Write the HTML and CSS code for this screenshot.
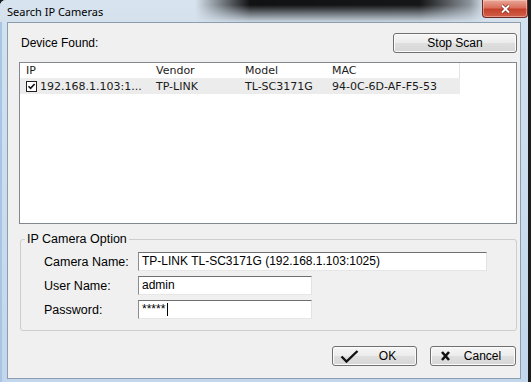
FILE: index.html
```html
<!DOCTYPE html>
<html lang="en">
<head>
    <meta charset="UTF-8">
    <meta name="viewport" content="width=device-width, initial-scale=1.0">
    <title>Search IP Cameras</title>
    <link rel="stylesheet" href="styles.css">
</head>
<body>
    <div class="window">
        <!-- Titelleiste -->
        <div class="titlebar">
            <span class="title">Search IP Cameras</span>
            <span class="close-btn">
                <svg width="11" height="10" viewBox="0 0 11 10">
                    <path d="M2 1.5 L9 8.5 M9 1.5 L2 8.5" stroke="#7a2015" stroke-width="3.2" fill="none"/>
                    <path d="M2 1.5 L9 8.5 M9 1.5 L2 8.5" stroke="#ffffff" stroke-width="2" fill="none"/>
                </svg>
            </span>
        </div>

        <div class="client">
            <div class="top-row">
                <span class="text">Device Found:</span>
                <button class="btn btn-scan">Stop Scan</button>
            </div>

            <!-- Geräteliste -->
            <div class="listview">
                <div class="list-head">
                    <div class="col col-ip">IP</div>
                    <div class="col col-vendor">Vendor</div>
                    <div class="col col-model">Model</div>
                    <div class="col col-mac">MAC</div>
                </div>
                <div class="list-row">
                    <div class="col col-ip">
                        <svg class="checkbox" width="11" height="11" viewBox="0 0 11 11">
                            <rect x="0.5" y="0.5" width="10" height="10" fill="#fff" stroke="#1f1f1f"/>
                            <path d="M2.5 5.2 L4.6 7.4 L8.6 3" stroke="#111" stroke-width="1.6" fill="none"/>
                        </svg>
                        192.168.1.103:1...
                    </div>
                    <div class="col col-vendor">TP-LINK</div>
                    <div class="col col-model">TL-SC3171G</div>
                    <div class="col col-mac">94-0C-6D-AF-F5-53</div>
                </div>
            </div>

            <!-- Kamera-Optionen -->
            <fieldset class="group">
                <legend>IP Camera Option</legend>
                <div class="form">
                    <span class="form-label">Camera Name:</span>
                    <div class="field field-wide">TP-LINK TL-SC3171G (192.168.1.103:1025)</div>
                    <span class="form-label">User Name:</span>
                    <div class="field">admin</div>
                    <span class="form-label">Password:</span>
                    <div class="field">*****<span class="caret"></span></div>
                </div>
            </fieldset>

            <div class="actions">
                <button class="btn btn-icon">
                    <svg class="icon-ok" width="19" height="13" viewBox="0 0 19 13">
                        <path d="M1.5 6.5 L6.5 11.5 L17.5 1" stroke="#111" stroke-width="2.4" fill="none"/>
                    </svg>
                    <span class="btn-text">OK</span>
                </button>
                <button class="btn btn-icon">
                    <svg class="icon-cancel" width="9" height="10" viewBox="0 0 9 10">
                        <path d="M1 1 L8 9 M8 1 L1 9" stroke="#111" stroke-width="2.6" fill="none"/>
                    </svg>
                    <span class="btn-text">Cancel</span>
                </button>
            </div>
        </div>
    </div>
</body>
</html>
```

FILE: styles.css
```css
body {
    margin: 0;
    padding: 0;
    background-color: #1c1c1c;
    font-family: 'Liberation Sans', Arial, sans-serif;
    font-size: 12px;
    color: #000000;
}

/* Fensterrahmen */
.window {
    box-sizing: border-box;
    width: 528px;
    height: 382px;
    padding: 0 7px 3px;
    display: flex;
    flex-direction: column;
    background: linear-gradient(180deg, #d4e2f0 0%, #c2d7ec 100%);
    border-radius: 6px 6px 0 0;
    box-shadow: inset 2px 0 0 #a8c5e3, inset 0 1px 0 #8a98a8;
}

.titlebar {
    height: 22px;
    margin: 0 -7px;
    display: flex;
    align-items: flex-start;
    border-radius: 6px 6px 0 0;
    background:
        linear-gradient(180deg, rgba(212, 224, 236, 0) 0, rgba(212, 224, 236, 0) 5px, rgba(212, 224, 236, 0.95) 22px),
        linear-gradient(90deg, rgba(0, 0, 0, 0) 195px, rgba(0, 0, 0, 0.92) 250px, rgba(0, 0, 0, 0.9) 420px, rgba(0, 0, 0, 0.35) 470px, rgba(0, 0, 0, 0) 485px),
        #d7e3ee;
}

.title {
    font-family: 'Noto Sans', sans-serif;
    font-size: 11px;
    line-height: 22px;
    padding: 1px 0 0 7px;
}

.close-btn {
    margin-left: auto;
    width: 46px;
    height: 18px;
    box-sizing: border-box;
    display: flex;
    align-items: center;
    justify-content: center;
    border: 1px solid #6e2a22;
    border-top: none;
    border-radius: 0 0 4px 4px;
    background: linear-gradient(180deg, #e9a89a 0%, #d9705d 45%, #c5422c 55%, #d0604a 100%);
    box-shadow: inset 0 0 0 1px rgba(255, 220, 210, 0.45);
}

/* Client-Bereich */
.client {
    flex: 1;
    box-sizing: border-box;
    display: flex;
    flex-direction: column;
    padding: 10px 3px 0 11px;
    background-color: #f0f0f0;
    border: 1px solid #8d9db0;
}

.top-row {
    height: 20px;
    display: flex;
    align-items: center;
    justify-content: space-between;
}

.top-row .text {
    margin-left: 2px;
}

.btn {
    box-sizing: border-box;
    height: 20px;
    padding: 0;
    margin: 0;
    font-family: 'Liberation Sans', Arial, sans-serif;
    font-size: 12px;
    color: #000;
    border: 1px solid #707070;
    border-radius: 3px;
    background: linear-gradient(180deg, #f6f6f6 0%, #ececec 48%, #dfdfdf 52%, #d6d6d6 100%);
    box-shadow: inset 0 0 0 1px #fbfbfb;
}

.btn-scan {
    width: 124px;
}

/* Liste */
.listview {
    box-sizing: border-box;
    height: 162px;
    margin-top: 9px;
    background-color: #ffffff;
    border: 1px solid #828790;
    font-family: 'DejaVu Sans', Verdana, sans-serif;
    font-size: 11px;
    color: #1a1a1a;
}

.list-head {
    display: flex;
    height: 16px;
    line-height: 15px;
}

.list-head .col {
    border-bottom: 1px solid #eeeeee;
}

.list-head .col-mac {
    border-right: 1px solid #e3e3e3;
}

.list-row {
    display: flex;
    width: 440px;
    height: 15px;
    line-height: 15px;
    background-color: #ececec;
}

.col {
    box-sizing: border-box;
    padding-left: 6px;
    white-space: nowrap;
}

.col-ip { width: 130px; }
.col-vendor { width: 89px; }
.col-model { width: 87px; }
.col-mac { width: 134px; }

.list-row .col-ip {
    display: flex;
    align-items: center;
}

.checkbox {
    margin-right: 3px;
}

/* Gruppe */
.group {
    margin: 8px 0 0 1px;
    padding: 6px 0 11px 0;
    border: 1px solid #cdcdcd;
    border-radius: 3px;
}

.group legend {
    margin-left: 4px;
    padding: 0 2px;
    font-size: 12.5px;
    line-height: 14px;
}

.form {
    display: grid;
    grid-template-columns: 94px auto;
    row-gap: 5px;
    align-items: center;
    justify-items: start;
    padding-left: 23px;
}

.form-label {
    font-size: 12.5px;
}

.field {
    box-sizing: border-box;
    width: 174px;
    height: 19px;
    padding: 0 3px;
    line-height: 17px;
    font-size: 12px;
    background-color: #ffffff;
    border: 1px solid;
    border-color: #6f6f6f #e2e2e2 #e6e6e6 #8c8c8c;
    display: flex;
    align-items: center;
}

.field-wide {
    width: 349px;
}

.caret {
    display: inline-block;
    width: 1px;
    height: 13px;
    margin-left: 2px;
    background-color: #000;
}

/* Buttons unten */
.actions {
    display: flex;
    justify-content: flex-end;
    gap: 13px;
    margin-top: 15px;
    padding-right: 1px;
}

.btn-icon {
    width: 85px;
    display: flex;
    align-items: center;
    padding-left: 7px;
}

.btn-icon + .btn-icon {
    width: 86px;
    padding-left: 10px;
}

.btn-text {
    flex: 1;
    text-align: center;
}
```
